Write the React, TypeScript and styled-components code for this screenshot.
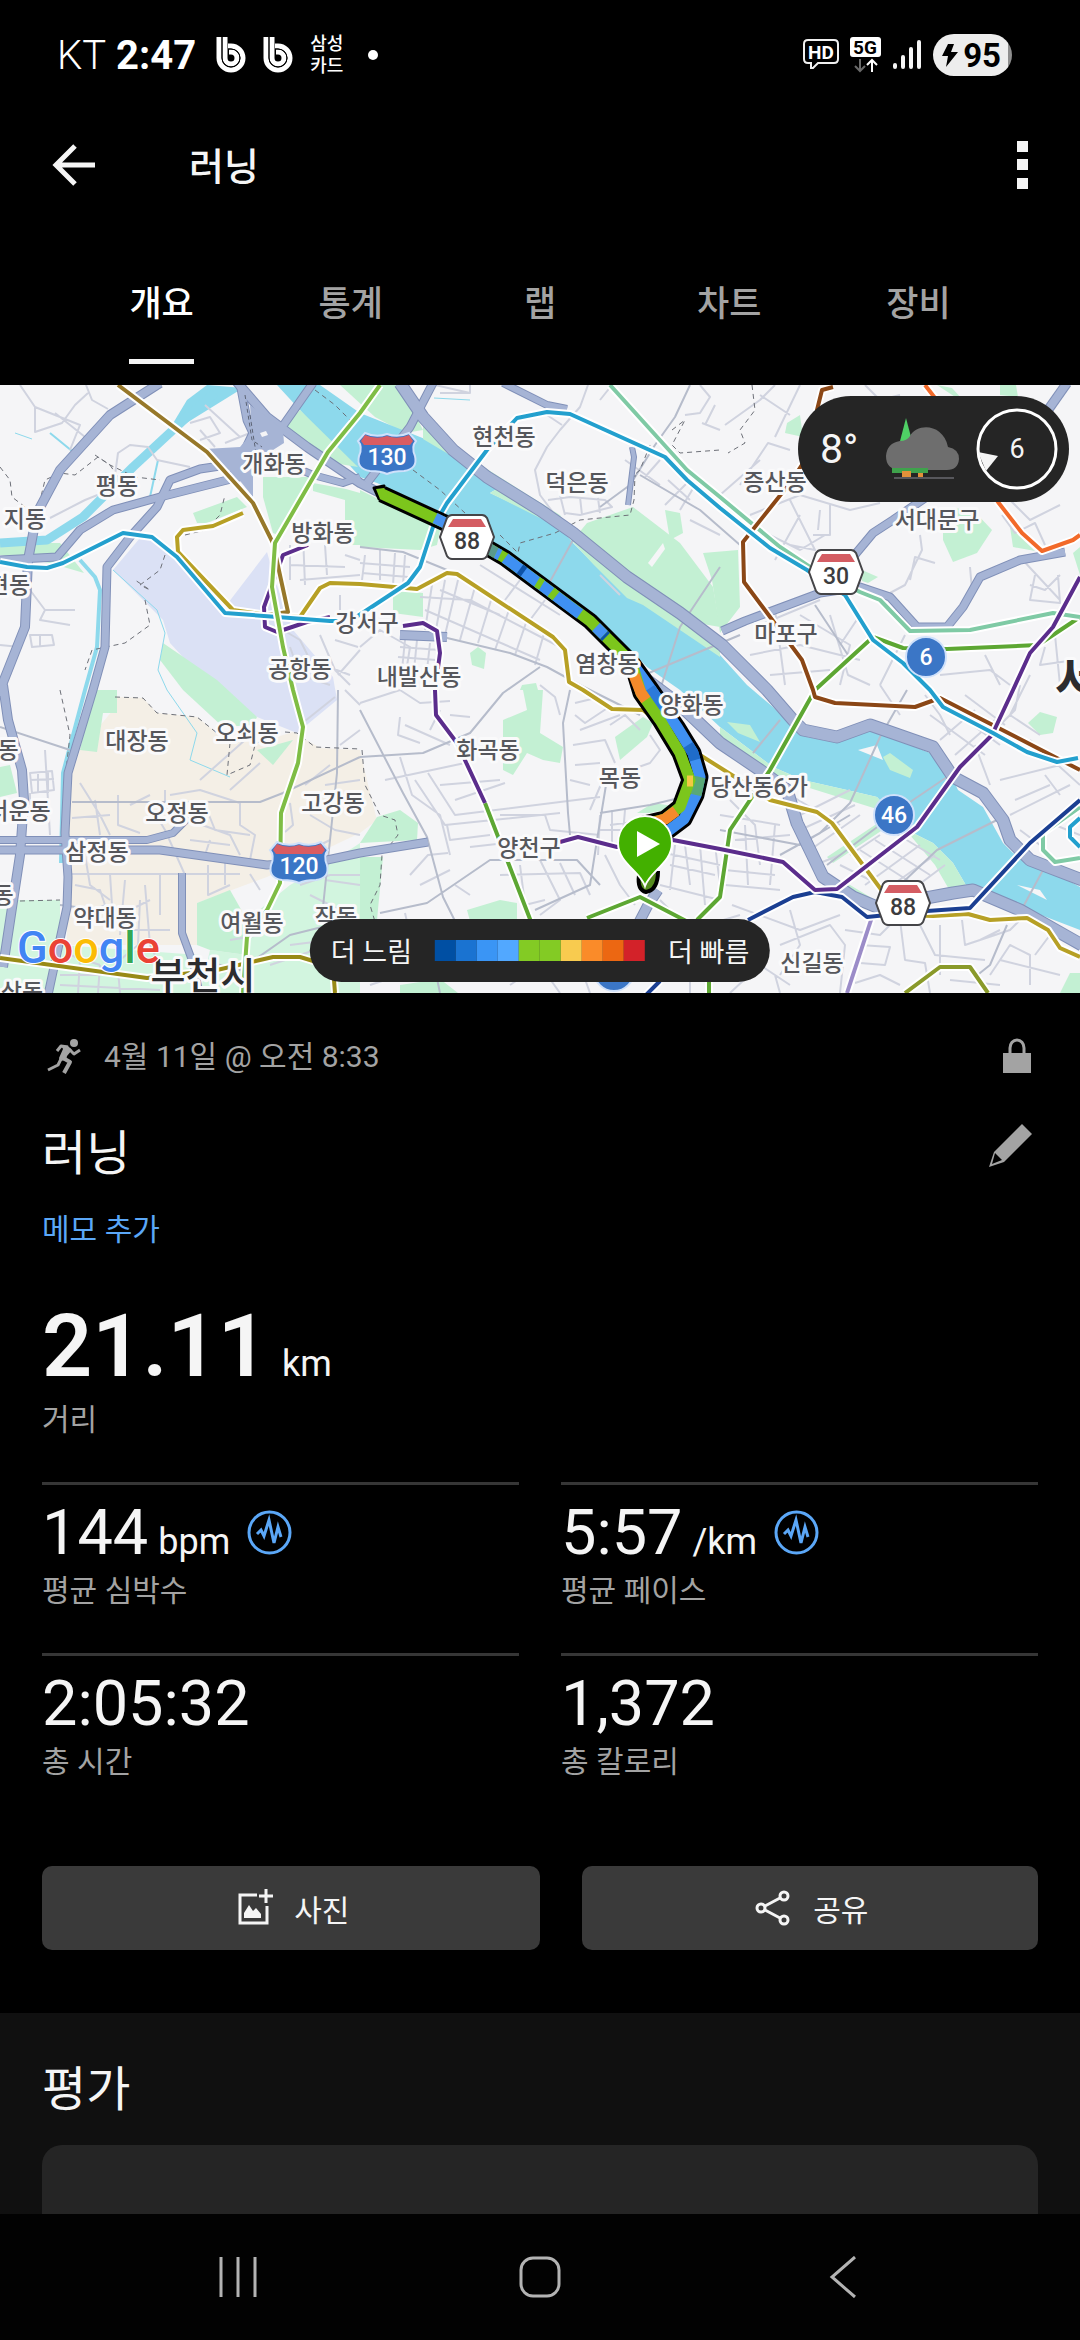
import { useState } from 'react'
import styled, { createGlobalStyle } from 'styled-components'

const colors = {
  black: '#000000',
  nav: '#020202',
  section: '#101010',
  pill: '#252525',
  button: '#3a3a3a',
  divider: '#363636',
  muted: '#a3a3a3',
  light: '#f5f5f5',
  link: '#5ba7f7',
}

const mapColors = {
  land: '#f5f5f7',
  water: '#8dd9ec',
  park: '#c3f0d3',
  field: '#f4efe6',
  airport: '#dbe1f5',
  street: '#d0d3df',
  road: '#b6bccb',
  highway: '#a6b4d5',
  highwayEdge: '#8090b8',
}

const tabs = ['개요', '통계', '랩', '차트', '장비']

const paceColors = [
  '#004fa3',
  '#1a73d1',
  '#3a95f5',
  '#52a8ff',
  '#83cb24',
  '#83cb24',
  '#f8cb4f',
  '#fa8b29',
  '#ec6712',
  '#d32229',
]

const stats = [
  { value: '144', unit: 'bpm', label: '평균 심박수', chart: true },
  { value: '5:57', unit: '/km', label: '평균 페이스', chart: true },
  { value: '2:05:32', unit: '', label: '총 시간', chart: false },
  { value: '1,372', unit: '', label: '총 칼로리', chart: false },
]

// map data, all in the 1080 x 608 space of the map

const fields = [
  '117,312 143,313 157,328 197,332 217,348 257,358 293,347 320,363 360,365 370,408 377,435 360,448 267,492 197,518 197,560 67,560 67,405 80,365 113,325',
]

const airport = '113,185 140,153 153,152 225,222 267,167 275,195 293,245 333,292 337,315 297,348 257,332 213,305 170,258 163,235'

const parks = [
  '263,92 310,92 283,152 273,148 263,112',
  '313,98 346,104 360,108 360,160 345,160 345,115 313,106',
  '193,128 237,112 247,122 207,138 197,138',
  '163,258 217,295 257,332 253,340 223,342 183,305 160,275',
  '0,158 60,158 84,188 50,178 0,170',
  '360,105 440,145 437,160 420,165 360,162',
  '393,205 423,208 423,232 393,228',
  '340,0 400,0 423,45 405,48 375,32',
  '573,155 587,138 633,122 680,158 713,202 720,242 680,235 627,195',
  '665,125 680,128 683,148 670,155',
  '703,168 738,165 740,222 720,248 712,195',
  '943,122 973,125 992,145 977,168 953,177 943,155',
  '787,38 800,30 803,52 785,48',
  '937,0 952,3 962,14 975,25',
  '1000,0 1016,0 1018,12 1000,10',
  '1010,142 1035,166 1013,162',
  '1073,168 1080,162 1080,190',
  '862,185 878,192 868,198 862,196',
  '503,335 527,325 523,305 543,305 540,348 563,362 560,378 543,375 527,368 513,390 503,385',
  '470,268 478,262 486,268 484,284 472,280',
  '522,300 536,298 538,305 520,305',
  '615,352 643,332 653,338 647,352 620,375',
  '377,432 400,425 418,438 417,455 360,458',
  '360,472 383,472 377,535 360,540',
  '467,525 500,515 517,518 517,534 470,536',
  '637,428 653,418 680,422 650,428',
  '400,600 440,594 458,608 400,608',
  '93,305 117,305 117,328 103,328 97,367 80,365',
  '257,365 293,355 273,380',
  '0,382 10,380 17,408 0,412',
  '827,472 887,432 893,438 833,478',
  '1028,338 1040,327 1057,332 1053,348 1040,350',
  '1060,608 1070,588 1080,588 1080,608',
  '197,518 230,505 247,535 247,570 210,565 197,560',
]

const palePark = [
  '247,535 290,500 327,480 360,458 360,608 200,608 210,565 247,570',
  '0,515 60,515 60,560 200,570 200,608 0,608',
]

const river =
  'M320 0 L360 28 L405 46 L430 56 L460 75 L500 102 L490 108 L520 122 L560 142 L573 158 L593 178 L627 212 L643 218 L680 240 L720 270 L747 300 L773 322 L793 342 L807 352 L833 357 L853 352 L873 345 L893 353 L930 368 L950 388 L958 405 L983 422 L1003 458 L1013 468 L1037 478 L1080 502 L1080 545 L1020 522 L987 505 L967 502 L953 478 L933 458 L907 445 L877 412 L847 405 L803 395 L773 382 L720 342 L680 305 L647 282 L593 228 L547 195 L487 158 L443 128 L377 98 L360 92 L300 25 L277 0 Z'

const riverside = [
  '300,25 358,82 333,78 283,42',
  '423,40 487,84 560,130 573,150 627,195 720,262 720,272 643,220 627,213 593,179 560,143 520,123 490,108 500,102 460,76 423,54',
  '720,342 773,382 803,395 847,405 877,412 900,438 880,425 800,400 760,384 720,350',
  '907,445 933,458 953,478 967,502 950,506 935,480 910,450',
  '727,337 750,340 760,357 738,348',
  '883,372 890,368 913,385 910,393 890,385',
  '830,495 850,500 880,518 860,515',
]

const sandbars = ['858,365 877,360 883,375', '1017,500 1040,505 1047,515', '648,178 663,158 665,164 652,182']

const highways = [
  { d: 'M160 -2 L110 30 L60 85 L37 128 L28 175 L25 242 L-2 310', w: 8 },
  { d: 'M0 175 L57 172 L80 145 L113 125 L160 112 L247 90', w: 7 },
  { d: 'M290 80 L313 90 L343 98 L360 92', w: 6 },
  { d: 'M240 78 L200 84 L170 95 L157 122 L130 152 L107 182 L105 262 L93 305 L68 388 L65 448 L68 492 L67 522 L48 610', w: 7 },
  { d: 'M240 -2 L247 35 L253 48 L233 90', w: 7 },
  { d: 'M313 -2 L280 45 L240 88', w: 7 },
  { d: 'M236 -4 L267 32 L307 62 L360 98 L380 108', w: 8 },
  { d: 'M433 -2 L410 42 L367 98', w: 7 },
  { d: 'M400 -2 L423 32 L453 65 L487 92 L540 125 L573 148 L627 192 L680 228 L722 260 L767 305 L793 335 L803 345 L837 352 L870 340 L893 348 L933 362 L953 392 L983 408 L1003 435 L1010 455 L1030 475 L1082 495', w: 11 },
  { d: 'M640 290 L680 320 L720 358 L760 385 L787 405 L797 438 L823 492 L853 512 L877 522 L953 508 L973 505 L1020 525 L1082 560', w: 11 },
  { d: 'M503 -2 L547 20 L567 24', w: 6 },
  { d: 'M632 62 L634 72 L628 120', w: 4 },
  { d: 'M3 300 L8 335 L22 385 L24 415 L20 470 L3 582', w: 8 },
  { d: 'M0 455 L147 455 L173 448 L203 418', w: 6 },
  { d: 'M0 465 L160 465 L267 480 L327 475 L360 468 L428 457', w: 7 },
  { d: 'M182 488 L182 548 L193 578 L200 610', w: 6 },
  { d: 'M1067 -2 L1048 25', w: 8 },
  { d: 'M925 113 L893 135 L873 148 L853 172', w: 7 },
  { d: 'M722 246 L745 236 L820 208 L860 202 L890 212 L917 242 L947 242 L963 222 L980 192 L1020 175 L1065 167', w: 7 },
  { d: 'M400 250 L447 252', w: 8 },
  { d: 'M658 505 L648 520 L635 545', w: 9 },
]

const interchange = '250,20 267,32 283,45 284,58 262,72 253,85 253,112 237,92 213,72 205,64 240,62 252,48'

const arterials =
  'M360 162 L403 167 L447 185 M443 252 L510 268 L547 282 L580 300 L640 330 M360 325 L403 408 L427 452 L443 512 L457 540 M360 372 L423 368 L470 348 L503 308 L540 282 M570 305 L563 338 L568 428 L570 450 M380 528 L427 518 L490 475 L577 475 L600 500 M72 417 L260 417 L283 408 L360 372 M0 342 L70 365 M338 305 L337 388 L323 522 M573 155 L547 202 M720 182 L680 242 L660 305 M907 305 L880 352 L850 418 L820 448 L780 470 M780 335 L753 368 M947 392 L913 415 L860 455 L827 480 M1003 432 L937 465 L900 500 M1043 485 L1023 522 M640 90 L700 125 L740 160 M690 0 L675 32 L655 60 L630 100 L600 122 M644 290 L740 250 M815 220 L848 270 M600 428 L650 420 L700 408 M430 560 L440 608 M1007 540 L990 580 L975 592 M720 445 L800 460 L850 430 M535 525 L590 500 L597 455 L606 400 M200 575 L240 585 L290 550 L330 540 M60 520 L100 525 L130 540'

const streets =
  'M20 0 L35 22 L35 47 L62 38 L75 20 L88 8 M35 22 L80 40 L70 65 M86 0 L92 15 L108 24 M55 28 L85 52 M115 90 L118 68 L130 60 L148 62 L157 75 L190 82 M50 133 L85 115 L110 105 M190 38 L210 32 L220 48 L200 55 M205 20 L240 52 M225 58 L250 48 M200 45 L215 62 M30 205 L45 225 L75 225 M45 225 L40 235 L70 240 M30 250 L52 250 L54 260 L32 262 Z M40 250 L40 262 M0 260 L20 262 L10 290 M290 160 L290 195 M290 180 L345 182 M303 150 L305 200 M325 160 L327 190 M300 195 L360 190 M340 210 L340 230 L360 228 M345 170 L360 175 M290 262 L300 290 L330 300 M283 245 L300 255 L310 275 L350 290 M320 250 L335 285 L350 300 M335 255 L358 262 M338 290 L360 265 M360 262 L380 245 L410 262 L404 300 M435 0 L470 8 M470 0 L470 8 L440 8 M588 0 L580 22 L560 45 L547 62 L535 85 L540 110 L555 130 M547 30 L562 40 M612 0 L600 15 M700 0 L710 12 L700 28 L685 30 M715 20 L705 40 M720 45 L702 38 M548 115 L570 112 L605 115 L612 122 L580 130 L565 128 M560 110 L565 130 M580 112 L582 130 M598 113 L600 128 M660 75 L645 92 M690 95 L665 120 M676 85 L700 108 M668 95 L690 115 M700 92 L680 125 M625 75 L660 100 M720 150 L690 135 M590 270 L610 290 M620 210 L600 190 M725 40 L760 15 L775 0 M740 100 L768 58 L790 65 M800 0 L775 52 M760 10 L790 30 M720 110 L760 75 M750 130 L800 110 L850 125 L880 118 M790 115 L815 165 L790 160 M820 125 L818 145 M830 120 L830 150 L813 150 M760 145 L800 165 L825 150 M775 175 L800 130 M865 0 L880 15 L900 10 M1055 30 L1060 50 L1030 80 M1005 110 L1030 135 L1060 120 M1010 135 L1025 150 M920 150 L922 165 L905 200 L890 208 M910 195 L915 172 L935 178 M970 182 L972 205 M1002 130 L1015 148 L1035 138 L1045 160 M1030 200 L1045 205 L1060 190 M1035 190 L1030 215 L1060 218 L1058 190 M1020 172 L1060 215 M760 240 L820 215 M775 225 L785 300 M800 230 L850 260 L840 300 M750 270 L800 260 L860 275 M770 290 L830 285 M830 230 L848 290 L870 300 M860 230 L840 260 M905 250 L880 300 M940 290 L990 285 L1010 300 M985 270 L1000 300 M1045 262 L1040 280 L1075 275 M1055 250 L1060 300 M880 300 L900 330 M925 310 L940 330 L950 350 M1030 290 L1010 330 L1040 350 M1000 340 L1015 325 L1020 300 M975 360 L990 400 M1030 355 L1080 400 M1000 395 L1060 380 M1015 415 L1050 400 M1010 430 L1070 400 M1045 390 L1060 410 M1020 445 L1040 460 M1055 440 L1080 450 M360 318 L400 305 L420 318 L450 316 M400 332 L398 350 L420 358 M440 325 L430 345 M450 330 L470 332 M385 395 L465 378 M400 372 L412 410 L440 430 L450 470 M415 395 L445 440 L560 428 M428 388 L455 430 L600 412 M440 400 L500 395 M447 440 L450 455 L490 450 M455 415 L505 398 M405 340 L450 360 M500 430 L545 430 L550 445 L600 450 M470 462 L560 452 M540 300 L555 312 L560 330 M575 318 L600 312 M575 330 L585 338 L612 320 M580 345 L620 330 M573 360 L605 355 L615 378 M590 425 L605 390 M575 380 L600 378 M570 395 L590 400 M650 350 L660 365 L650 378 L630 385 M610 340 L625 330 L640 345 M410 490 L428 470 L448 468 M420 500 L450 485 M455 500 L470 510 M405 528 L410 550 M470 560 L500 540 M520 480 L525 520 L545 515 M500 490 L580 488 L590 510 M540 475 L560 515 L540 530 M560 478 L575 510 M605 470 L620 500 L635 520 M610 440 L640 436 M600 430 L598 470 M612 425 L612 460 M625 425 L622 460 M600 445 L622 445 M665 455 L718 462 M665 468 L720 480 M670 480 L715 490 M675 460 L670 505 M685 460 L690 500 M700 460 L705 520 M715 460 L720 500 M660 500 L720 515 M660 515 L690 545 L740 530 M720 430 L780 440 M725 485 L775 490 M725 500 L780 505 M775 440 L770 500 M745 440 L748 500 M760 480 L755 440 L730 415 M735 455 L790 450 M732 520 L800 545 L840 530 M780 560 L830 540 L845 560 L840 608 M720 570 L755 540 M730 608 L760 580 L790 600 M790 525 L800 560 L780 590 M845 545 L880 550 L900 530 M860 560 L890 562 L885 580 L860 578 M900 535 L905 575 L925 578 L930 608 M920 540 L935 570 L985 575 M940 540 L940 590 M962 535 L965 560 L1010 545 L1020 535 M990 590 L1010 560 L1030 570 L1030 600 M1000 575 L1060 590 M1035 570 L1050 550 M980 555 L1000 545 M950 595 L1000 600 M855 598 L880 590 L900 600 M30 388 L52 386 L54 405 L32 408 Z M30 395 L54 394 M38 387 L38 408 M48 386 L48 408 M30 408 L30 420 M45 365 L50 450 M80 398 L100 430 L110 450 M72 433 L110 430 M85 470 L90 500 L110 515 M95 415 L100 450 M118 410 L118 440 L140 448 M130 420 L150 410 M150 420 L165 445 L185 490 M165 405 L165 418 M170 410 L200 405 L240 418 L240 440 L255 450 L250 475 M205 420 L215 445 L250 450 M180 432 L230 450 L240 470 M190 455 L230 460 M210 455 L205 470 M200 395 L245 355 M260 378 L230 405 M290 418 L293 440 L285 447 M305 400 L330 380 M325 400 L360 395 M310 430 L335 445 L360 450 M300 340 L335 312 M345 305 L360 320 M340 360 L360 345 M300 470 L330 455 M325 495 L360 500 M70 489 L240 489 M75 500 L100 505 L105 520 L85 530 M110 489 L112 520 M125 495 L120 550 M145 500 L150 560 M160 489 L160 530 M208 480 L208 510 L230 500 M225 470 L225 500 M250 489 L260 505 M100 540 L150 515 M130 545 L170 545 M140 515 L138 560 L120 575 M230 555 L260 550 M290 560 L330 555 M270 580 L330 560 M300 500 L330 490 L360 490 M310 510 L350 530 M70 570 L100 580 M60 590 L120 590 M80 575 L78 608 M100 580 L98 608 M118 585 L120 608 M60 600 L160 605 M150 560 L165 590 M370 600 L400 590 M510 600 L540 580 L560 608 M580 580 L590 608 M690 580 L690 608 M780 608 L775 590'

const borders =
  'M0 82 L10 95 L12 112 L25 122 M37 128 L45 95 L60 88 L75 90 L98 72 L110 80 L135 92 L160 95 M95 70 L110 80 L120 95 M185 150 L205 145 L220 130 L225 110 M165 170 L160 185 L140 200 L150 205 L135 195 M145 215 L150 240 L125 258 L92 265 L85 285 M60 305 L70 350 L65 395 M115 312 L143 313 L157 328 L197 332 L217 348 M285 347 L297 348 L315 362 L360 364 M230 358 L227 390 L250 380 L255 360 L265 352 M20 516 L60 515 M413 85 L440 105 L465 128 M315 5 L335 20 L350 35 M500 150 L518 168 L520 158 L555 148 L580 135 L630 130 L634 115 L635 90 M650 60 L640 85 L632 92 M672 45 L685 35 L672 60 L680 68 L720 65 M752 0 L755 25 L740 45 L745 58 L728 68 M362 365 L365 400 L380 430 L395 435 L398 450 L382 470 L380 500 L370 520 L376 540'

const streams = [
  { d: 'M215 8 L187 32 L133 82 L83 132 L47 155 L0 158', w: 9 },
  { d: 'M80 175 L95 192 L100 205 L97 262 L85 305 L63 388 L61 478', w: 4 },
  { d: 'M158 75 L150 112', w: 2 },
  { d: 'M50 48 L72 66 L100 38', w: 2 },
  { d: 'M15 48 L32 54', w: 1 },
  { d: 'M434 13 L470 15', w: 1 },
  { d: 'M113 185 L157 225 L165 248 L158 285 L167 305 L197 348 L190 375 L230 392', w: 1 },
]

const metroLines = [
  { color: '#5da733', d: 'M587 533 L640 512 L690 538 M485 418 L530 534 L545 575 M697 535 L720 512 L730 445 L770 385 L815 305 L873 252 L903 263 L947 264 L1038 260 L1080 232 M709 590 L709 610' },
  { color: '#8a9a2a', d: 'M905 608 L940 582 L970 582 L988 608' },
  { color: '#988a16', d: 'M0 573 L147 593 L217 585 L273 572 L300 572 L333 582 L335 608' },
  { color: '#9b8cc8', d: 'M847 608 L872 532' },
  { color: '#b7a025', d: 'M243 128 L213 141 L183 145 L177 152 L178 167 L233 225 L267 230 L300 232 L320 203 L330 198 L360 199 L417 204 L447 188 L457 189 L553 252 L565 265 L569 297 L583 305 L612 324 L643 325 L700 370 L735 392 L770 415 L817 427 L832 438 L880 503 L900 530 L933 531 L968 529 L990 535 L1027 533 L1048 545 L1060 563 L1080 572' },
  { color: '#7fcaa5', d: 'M610 0 L687 85 L720 112 L780 162 L810 182 L860 207 L880 215 L910 246 L970 245 L1053 228 L1080 232 M1080 422 L1043 448 L1043 465 L1055 477 L1080 473' },
  { color: '#8b4716', d: 'M833 2 L822 5 L817 25 L815 60 L790 98 L743 157 L744 197 L802 275 L813 305 L815 312 L835 318 L915 322 L940 313 L1080 385' },
  { color: '#f26a2a', d: 'M925 0 L935 13 L998 117 L1022 148 L1042 166 L1073 155 L1080 150' },
  { color: '#1b3f92', d: 'M748 535 L793 512 L815 507 L842 512 L867 532 L927 526 L970 523 L1030 458 L1080 415 M660 596 L646 610' },
  { color: '#5b2d8c', d: 'M308 160 L283 170 L264 222 L265 242 L277 247 L307 237 L330 232 M403 241 L423 238 L437 246 L440 268 L435 305 L436 330 L457 358 L485 418 M560 457 L578 452 L617 462 L673 455 L720 464 L783 477 L815 505 L837 504 L917 442 L960 382 L992 350 L1013 305 L1030 268 L1053 242 L1080 192' },
  { color: '#97782a', d: 'M118 0 L207 67 L253 118 L273 158 L288 227 L267 230' },
  { color: '#23a0ce', d: 'M0 177 L27 182 L47 183 L63 178 L123 148 L152 152 L177 172 L225 228 L330 236 L350 236 L367 225 L408 198 L420 182 L433 142 L447 118 L487 65 L517 33 L547 27 L570 29 L665 72 L687 95 L720 123 L770 163 L807 185 L845 210 L873 255 L903 278 L930 305 L943 322 L993 348 L1027 367 L1057 377 L1078 373 M1080 433 L1070 442 L1070 452 L1080 462' },
  { color: '#7fbd45', d: 'M380 0 L360 28 L328 67 L275 158 L272 202 L283 262 L293 305 L303 342 L298 378 L281 428 L280 498 L267 525 L247 552 L243 608' },
]

const routeOuter = 'M382 109 L445 138 L505 173 L590 236 L632 278'
const routeOut = 'M632 278 L650 303 L677 342 L693 368 L700 392 L696 410 L684 434 L668 446 L640 455'
const routeBack = 'M632 278 L641 308 L660 335 L680 368 L690 395 L680 422 L665 434 L640 440'

const routePieces = [
  { d: routeOuter, c: '#7cc61c' },
  { d: 'M435 133 L445 138 L490 164', c: '#4793f0' },
  { d: 'M488 163 L496 168', c: '#5a9a8c' },
  { d: 'M496 168 L500 170', c: '#4793f0' },
  { d: 'M505 173 L580 229', c: '#3f90f2' },
  { d: 'M520 184 L524 187', c: '#0d52a8' },
  { d: 'M537 197 L542 200', c: '#7cc61c' },
  { d: 'M551 207 L556 211', c: '#7cc61c' },
  { d: 'M596 242 L604 250', c: '#4793f0' },
  { d: 'M604 250 L606 252', c: '#0d52a8' },
  { d: routeOut, c: '#3f90f2' },
  { d: 'M650 303 L663 322', c: '#2c7ada' },
  { d: 'M688 360 L693 368 L695 375', c: '#1f6cc9' },
  { d: 'M700 392 L696 410', c: '#59a877' },
  { d: routeBack, c: '#7cc61c' },
  { d: 'M634 290 L641 308 L646 315', c: '#f58a2b' },
  { d: 'M676 426 L665 434 L655 437', c: '#f58a2b' },
  { d: 'M687 396 L693 396', c: '#f3c845' },
]

const placeLabels: [string, number, number][] = [
  ['평동', 117, 101],
  ['지동', 25, 134],
  ['현동', 9, 200],
  ['개화동', 274, 79],
  ['방화동', 323, 148],
  ['강서구', 367, 238],
  ['공항동', 300, 284],
  ['현천동', 504, 52],
  ['덕은동', 577, 98],
  ['내발산동', 419, 292],
  ['염창동', 607, 279],
  ['증산동', 775, 97],
  ['서대문구', 937, 135],
  ['마포구', 786, 249],
  ['대장동', 137, 356],
  ['오쇠동', 247, 348],
  ['동', 8, 365],
  ['서운동', 19, 426],
  ['오정동', 177, 428],
  ['고강동', 333, 418],
  ['삼정동', 97, 467],
  ['동', 3, 510],
  ['약대동', 105, 533],
  ['여월동', 252, 538],
  ['작동', 336, 532],
  ['상동', 22, 607],
  ['화곡동', 488, 365],
  ['목동', 620, 393],
  ['양화동', 692, 320],
  ['당산동6가', 759, 402],
  ['양천구', 529, 463],
  ['신길동', 812, 578],
]

const InterstateShield = ({ x, y, label }: { x: number; y: number; label: string }) => (
  <g transform={`translate(${x} ${y})`}>
    <path
      d="M-22 -20 Q-11 -15 0 -19 Q11 -15 22 -20 L29 -12 Q24 -6 28 3 Q31 16 17 18 Q6 18 0 21 Q-6 18 -17 18 Q-31 16 -28 3 Q-24 -6 -29 -12 Z"
      fill="#3b76c6"
      stroke="#cfe1fb"
      strokeWidth="2"
    />
    <path d="M-22 -18 Q-11 -13 0 -17 Q11 -13 22 -18 L26 -12 L23 -8 H-23 L-26 -12 Z" fill="#d95c62" />
    <ShieldText y="12" fill="#ffffff">
      {label}
    </ShieldText>
  </g>
)

const HexShield = ({ x, y, label }: { x: number; y: number; label: string }) => (
  <g transform={`translate(${x} ${y})`}>
    <path
      d="M-15 -22 H15 Q18 -22 20 -19 L27 0 L20 19 Q18 22 15 22 H-15 Q-18 22 -20 19 L-27 0 L-20 -19 Q-18 -22 -15 -22 Z"
      fill="#ffffff"
      stroke="#454548"
      strokeWidth="2"
    />
    <path d="M-14 -18 H14 L19 -10 H-19 Z" fill="#d45d63" />
    <ShieldText y="12" fill="#3c3c3e">
      {label}
    </ShieldText>
  </g>
)

const RoundShield = ({ x, y, label }: { x: number; y: number; label?: string }) => (
  <g transform={`translate(${x} ${y})`}>
    <circle r="20" fill="#3b76c6" stroke="#cfe1fb" strokeWidth="2" />
    {label && (
      <ShieldText y="8" fill="#ffffff">
        {label}
      </ShieldText>
    )}
  </g>
)

const RouteMap = () => (
  <StyledMapCanvas viewBox="0 0 1080 608" preserveAspectRatio="xMidYMid slice" role="img" aria-label="러닝 경로">
    <rect width="1080" height="608" fill={mapColors.land} />
    {fields.map(points => (
      <polygon key={points} points={points} fill={mapColors.field} />
    ))}
    <polygon points={airport} fill={mapColors.airport} />
    {palePark.map(points => (
      <polygon key={points} points={points} fill="#d2f5df" />
    ))}
    {parks.map(points => (
      <polygon key={points} points={points} fill={mapColors.park} />
    ))}
    <path d={river} fill={mapColors.water} />
    {riverside.map(points => (
      <polygon key={points} points={points} fill={mapColors.park} />
    ))}
    <polygon points="207,0 243,3 180,42 172,40 187,15" fill={mapColors.water} />
    {sandbars.map(points => (
      <polygon key={points} points={points} fill={mapColors.land} />
    ))}
    <g fill="none" strokeLinejoin="round">
      {streams.map(({ d, w }) => (
        <path key={d} d={d} stroke={mapColors.water} strokeWidth={w} />
      ))}
      <path d={streets} stroke={mapColors.street} strokeWidth="2" />
      {/* dense street blocks between 등촌 and 염창 */}
      <path
        d="M365 170 L362 195 M380 165 L380 195 M395 168 L393 200 M405 170 L403 200 M360 178 L410 182 M362 188 L408 192 M420 212 L470 215 L560 262 M425 225 L540 275 M432 200 L425 245 M445 195 L435 250 M458 195 L445 250 M475 202 L460 255 M492 212 L478 258 M510 222 L495 265 M528 232 L515 270 M545 245 L535 280 M440 205 L500 230 M400 262 L440 265 M398 272 L436 275 M405 255 L402 285 M417 255 L414 285 M430 258 L427 285 M480 180 L560 230 M520 195 L505 215 M545 215 L530 235"
        stroke={mapColors.street}
        strokeWidth="2"
      />
      {/* 여의도 blocks */}
      <path
        d="M850 470 L880 450 M840 480 L890 505 M860 465 L915 500 M875 455 L930 490 M890 445 L940 475 M850 490 L905 455 M865 500 L920 460 M885 505 L935 470 M905 510 L945 480 M790 410 L840 440 M800 430 L850 405 M800 445 L855 420 M810 465 L860 430 M815 480 L840 470 M940 355 L975 325 M955 370 L995 335 M930 330 L985 370 M945 320 L1000 360 M965 310 L1005 340"
        stroke={mapColors.street}
        strokeWidth="2"
      />
      <path d={arterials} stroke={mapColors.road} strokeWidth="2" />
      <path d={borders} stroke="#6d7078" strokeWidth="1" strokeDasharray="5 4" />
      {highways.map(({ d, w }) => (
        <path key={d} d={d} stroke={mapColors.highwayEdge} strokeWidth={w + 2} />
      ))}
      {highways.map(({ d, w }) => (
        <path key={d} d={d} stroke={mapColors.highway} strokeWidth={w} />
      ))}
      <polygon points={interchange} fill={mapColors.highway} />
      <path d="M260 48 L266 46 L268 50 L262 52 Z" fill={mapColors.land} />
      <path d="M245 10 L252 55 L262 62 M250 30 L256 68" stroke="#5d6475" strokeWidth="1" strokeDasharray="4 3" />
      {metroLines.map(({ color, d }) => (
        <g key={color}>
          <path d={d} stroke="#ffffff" strokeWidth="8" />
          <path d={d} stroke={color} strokeWidth="4" />
        </g>
      ))}
    </g>

    <g fill="none" strokeLinejoin="round">
      <path d="M639 490 Q637 505 646 507 Q658 505 658 486" stroke="#000000" strokeWidth="4" fill="#558b1e" />
      <path d="M384 101 L374 103 L379 114 Z" stroke="#000000" strokeWidth="3" fill="#000000" />
      {[routeOuter, routeOut, routeBack].map(d => (
        <path key={d} d={d} stroke="#000000" strokeWidth="17" />
      ))}
      {routePieces.map(({ d, c }) => (
        <path key={d + c} d={d} stroke={c} strokeWidth="11" />
      ))}
      <path d="M384 103 L376 104 L380 114 L388 112 Z" fill="#7cc61c" />
    </g>

    {placeLabels.map(([name, x, y]) => (
      <PlaceName key={`${name}${y}`} x={x} y={y + 8}>
        {name}
      </PlaceName>
    ))}
    <CityName x="203" y="604">
      부천시
    </CityName>
    <CityName x="1099" y="312" $big>
      서울
    </CityName>

    <InterstateShield x={387} y={68} label="130" />
    <InterstateShield x={299} y={477} label="120" />
    <HexShield x={467} y={152} label="88" />
    <HexShield x={836} y={187} label="30" />
    <HexShield x={903} y={518} label="88" />
    <RoundShield x={926} y={272} label="6" />
    <RoundShield x={894} y={430} label="46" />
    <RoundShield x={614} y={586} />

    <path
      d="M645 501 C640 486 618 478 618 458 A27 27 0 0 1 672 458 C672 478 650 486 645 501 Z"
      fill="#43b000"
      stroke="#ffffff"
      strokeWidth="2"
    />
    <path d="M637 446 L660 459 L637 472 Z" fill="#ffffff" />

    <GoogleMark x="17" y="578">
      <tspan fill="#4285f4">G</tspan>
      <tspan fill="#ea4335">o</tspan>
      <tspan fill="#fbbc05">o</tspan>
      <tspan fill="#4285f4">g</tspan>
      <tspan fill="#34a853">l</tspan>
      <tspan fill="#ea4335">e</tspan>
    </GoogleMark>
  </StyledMapCanvas>
)

const BlogIcon = () => (
  <svg width="30" height="36" viewBox="0 0 30 36" fill="none" stroke="#ffffff" strokeWidth="5" aria-hidden="true">
    <path d="M3 0 V21 A12 12 0 1 0 15 9 H12" />
    <path d="M9 0 V21 A6 6 0 1 0 15 15 H13" />
    <path d="M6 0 V21 A9 9 0 1 0 15 12 H12" stroke="#000000" strokeWidth="1" />
  </svg>
)

const ChartBadge = () => (
  <svg width="45" height="45" viewBox="0 0 45 45" fill="none" stroke={colors.link} strokeWidth="3" aria-hidden="true">
    <circle cx="22.500" cy="22.500" r="20.500" />
    <path d="M10 24 L14 20 L17 26 L22 10 L27 33 L31 17 L34 27" strokeWidth="3" />
  </svg>
)

const App = () => {
  const [activeTab, setActiveTab] = useState(tabs[0])

  return (
    <>
      <GlobalStyle />
      <StyledPage>
        <StyledStatusBar>
          <StyledStatusGroup>
            <StyledClock>
              <StyledCarrier>KT</StyledCarrier> 2:47
            </StyledClock>
            <StyledNotices>
              <BlogIcon />
              <BlogIcon />
              <StyledCardNotice>
                삼성
                <br />
                카드
              </StyledCardNotice>
              <StyledDot />
            </StyledNotices>
          </StyledStatusGroup>
          <StyledStatusGroup>
            <StyledSystemIcons>
              <svg width="36" height="32" viewBox="0 0 36 32" fill="none" aria-label="HD">
                <path
                  d="M5 1 H31 Q35 1 35 5 V20 Q35 24 31 24 H15 L10 29 H8 V24 H5 Q1 24 1 20 V5 Q1 1 5 1 Z"
                  stroke="#f0f0f0"
                  strokeWidth="2"
                />
                <StatusText x="18" y="20" fill="#ffffff">
                  HD
                </StatusText>
              </svg>
              <svg width="32" height="36" viewBox="0 0 32 36" fill="none" aria-label="5G">
                <rect width="31" height="20" rx="3" fill="#ffffff" />
                <StatusText x="15" y="17" fill="#000000">
                  5G
                </StatusText>
                <path d="M10 22 V34 M5 29 L10 34 L15 29" stroke="#6a6a6a" strokeWidth="2" />
                <path d="M22 35 V23 M17 28 L22 23 L27 28" stroke="#ffffff" strokeWidth="2" />
              </svg>
              <svg width="28" height="30" viewBox="0 0 28 30" stroke="#f5f5f5" strokeWidth="4" strokeLinecap="round" aria-hidden="true">
                <path d="M2 25 V27 M10 17 V27 M18 9 V27 M26 2 V27" />
              </svg>
            </StyledSystemIcons>
            <StyledBattery>
              <svg width="16" height="23" viewBox="0 0 16 23" aria-hidden="true">
                <path d="M6 0 H12 L9 8 H16 L4 23 L6 12 H0 Z" fill="#000000" />
              </svg>
              95
            </StyledBattery>
          </StyledStatusGroup>
        </StyledStatusBar>

        <StyledAppBar>
          <StyledIconButton aria-label="뒤로">
            <svg width="43" height="42" viewBox="0 0 43 42" fill="none" stroke={colors.light} strokeWidth="5" aria-hidden="true">
              <path d="M43 21 H4 M23 2 L4 21 L23 40" />
            </svg>
          </StyledIconButton>
          <StyledAppTitle>러닝</StyledAppTitle>
          <StyledIconButton aria-label="더보기">
            <svg width="11" height="48" viewBox="0 0 11 48" fill={colors.light} aria-hidden="true">
              <path d="M0 0 h11 v11 h-11 Z M0 18 h11 v11 h-11 Z M0 37 h11 v11 h-11 Z" />
            </svg>
          </StyledIconButton>
        </StyledAppBar>

        <StyledTabs role="tablist">
          {tabs.map(tab => (
            <StyledTab
              key={tab}
              role="tab"
              aria-selected={tab === activeTab}
              $active={tab === activeTab}
              onClick={() => setActiveTab(tab)}
            >
              {tab}
            </StyledTab>
          ))}
        </StyledTabs>

        <StyledMap>
          <RouteMap />
          <StyledWeather>
            <StyledTemperature>8°</StyledTemperature>
            <svg width="75" height="64" viewBox="0 0 75 64" aria-hidden="true">
              <path d="M21 1 L26 20 L22 28 H14 Z" fill="#4fd065" />
              <path d="M15 24 Q22 24 25 19 C32 6 58 6 63 30 Q74 32 74 42 Q73 53 62 53 H14 Q1 52 1 39 Q2 26 15 24 Z" fill="#6e6e6e" />
              <path d="M7 51 H43 V56 H7 Z" fill="#3fa24c" />
              <path d="M17 54 H26 V60 H17 Z M33 56 H38 V60 H33 Z" fill="#e2913a" />
              <path d="M9 61 H69" stroke="#57575c" strokeWidth="2" />
            </svg>
            <StyledWind>
              <svg width="82" height="82" viewBox="0 0 82 82" aria-hidden="true">
                <circle cx="41" cy="41" r="39" fill="none" stroke="#ffffff" strokeWidth="3" />
                <path d="M2 44 L22 48 L10 63 Z" fill={colors.light} />
              </svg>
              <StyledWindSpeed>6</StyledWindSpeed>
            </StyledWind>
          </StyledWeather>
          <StyledLegend>
            <span>더 느림</span>
            <StyledScale>
              {paceColors.map((color, index) => (
                <StyledSwatch key={index} $color={color} />
              ))}
            </StyledScale>
            <span>더 빠름</span>
          </StyledLegend>
        </StyledMap>

        <StyledSummary>
          <StyledDateRow>
            <svg width="44" height="36" viewBox="-6 -1 44 36" fill="none" stroke={colors.muted} strokeLinejoin="round" aria-hidden="true">
              <circle cx="26" cy="4" r="4" fill={colors.muted} stroke="none" />
              <path d="M13 6 L20 7 L24 11 L19 17 L18 21 L12 22 L11 19 L15 10 Z" fill={colors.muted} stroke="none" />
              <path d="M9 12 L13 7 L20 8" strokeWidth="3" />
              <path d="M21 10 L26 15 L32 11" strokeWidth="3" />
              <path d="M15 19 L22 23 L16 34" strokeWidth="4" />
              <path d="M13 20 L10 26 L0 31" strokeWidth="3" />
            </svg>
            <StyledDate>4월 11일 @ 오전 8:33</StyledDate>
            <StyledLock width="28" height="36" viewBox="0 0 28 36" fill="none" aria-label="비공개">
              <path d="M0 15 H28 V35 H0 Z" fill={colors.muted} />
              <path d="M7 16 V10 A7 8 0 0 1 21 10 V16" stroke={colors.muted} strokeWidth="3" />
            </StyledLock>
          </StyledDateRow>

          <StyledTitleRow>
            <StyledHeading>러닝</StyledHeading>
            <StyledIconButton aria-label="이름 편집">
              <svg width="44" height="44" viewBox="0 0 44 44" aria-hidden="true">
                <path d="M33 0 L43 10 L15 38 L0 43 L5 28 Z" fill={colors.muted} />
                <path d="M6 29 L13 36 L3 40 Z" fill="#000000" />
              </svg>
            </StyledIconButton>
          </StyledTitleRow>

          <StyledMemoLink href="#memo">메모 추가</StyledMemoLink>

          <StyledDistance>
            21.11
            <StyledUnit>km</StyledUnit>
          </StyledDistance>
          <StyledLabel>거리</StyledLabel>

          <StyledStats>
            {stats.map(({ value, unit, label, chart }) => (
              <StyledStat key={label}>
                <StyledValueRow>
                  <StyledValue>{value}</StyledValue>
                  {unit && <StyledUnit>{unit}</StyledUnit>}
                  {chart && (
                    <StyledBadge aria-label={`${label} 차트`}>
                      <ChartBadge />
                    </StyledBadge>
                  )}
                </StyledValueRow>
                <StyledLabel>{label}</StyledLabel>
              </StyledStat>
            ))}
          </StyledStats>

          <StyledActions>
            <StyledAction>
              <svg width="42" height="42" viewBox="0 0 42 42" fill="none" stroke={colors.light} strokeWidth="3" aria-hidden="true">
                <path d="M25 8 H8 V36 H35 V19" />
                <path d="M34 2 V16 M27 9 H41" />
                <path d="M12 31 V26 L17 18 L21 24 L24 21 L29 27 V31 Z" fill={colors.light} stroke="none" />
              </svg>
              사진
            </StyledAction>
            <StyledAction>
              <svg width="42" height="42" viewBox="0 0 42 42" fill="none" stroke={colors.light} strokeWidth="3" aria-hidden="true">
                <circle cx="10" cy="21" r="4" />
                <circle cx="33" cy="9" r="4" />
                <circle cx="33" cy="33" r="4" />
                <path d="M14 19 L29 11 M14 23 L29 31" />
              </svg>
              공유
            </StyledAction>
          </StyledActions>
        </StyledSummary>

        <StyledRating>
          <StyledHeading>평가</StyledHeading>
          <StyledRatingCard />
        </StyledRating>

        <StyledNavBar>
          <StyledIconButton aria-label="최근 앱">
            <svg width="42" height="42" viewBox="0 0 42 42" stroke="#b3b3b3" strokeWidth="3" aria-hidden="true">
              <path d="M4 1 V41 M21 1 V41 M38 1 V41" />
            </svg>
          </StyledIconButton>
          <StyledIconButton aria-label="홈">
            <svg width="42" height="42" viewBox="0 0 42 42" fill="none" stroke="#b3b3b3" strokeWidth="3" aria-hidden="true">
              <rect x="2" y="2" width="38" height="38" rx="12" />
            </svg>
          </StyledIconButton>
          <StyledIconButton aria-label="이전">
            <svg width="42" height="42" viewBox="0 0 42 42" fill="none" stroke="#b3b3b3" strokeWidth="3" aria-hidden="true">
              <path d="M34 1 L11 21 L34 41" />
            </svg>
          </StyledIconButton>
        </StyledNavBar>
      </StyledPage>
    </>
  )
}

export default App

const GlobalStyle = createGlobalStyle`
  * {
    box-sizing: border-box;
  }

  body {
    margin: 0;
    background: ${colors.black};
    color: ${colors.light};
    font-family: Roboto, 'Noto Sans CJK KR', sans-serif;
  }

  button {
    padding: 0;
    border: 0;
    background: none;
    color: inherit;
    font: inherit;
    cursor: pointer;
  }

  svg {
    display: block;
    flex-shrink: 0;
  }
`

const StyledPage = styled.div`
  min-height: 100vh;
  display: flex;
  flex-direction: column;
`

const StyledStatusBar = styled.div`
  height: 110px;
  padding: 0 68px 0 57px;
  display: flex;
  align-items: center;
  justify-content: space-between;
  color: #ffffff;
`
const StyledStatusGroup = styled.div`
  display: flex;
  align-items: center;
  gap: 12px;
`
const StyledClock = styled.div`
  font-size: 40px;
  font-weight: 700;
`
const StyledCarrier = styled.span`
  font-weight: 300;
`
const StyledNotices = styled.div`
  margin-left: 8px;
  display: flex;
  align-items: center;
  gap: 17px;
`
const StyledCardNotice = styled.div`
  font-size: 18px;
  font-weight: 500;
  line-height: 22px;
`
const StyledDot = styled.div`
  width: 10px;
  height: 10px;
  margin-left: 8px;
  border-radius: 5px;
  background: #ffffff;
`
const StyledSystemIcons = styled.div`
  display: flex;
  align-items: center;
  gap: 11px;
`
const StatusText = styled.text`
  font-size: 19px;
  font-weight: 700;
  text-anchor: middle;
`
const StyledBattery = styled.div`
  height: 42px;
  padding: 0 11px 0 9px;
  display: flex;
  align-items: center;
  gap: 5px;
  border-radius: 21px;
  background: linear-gradient(to right, #ededed 95%, #8e8e8e 95%);
  color: #000000;
  font-size: 33px;
  font-weight: 700;
`

const StyledAppBar = styled.header`
  height: 110px;
  padding: 0 52px;
  display: flex;
  align-items: center;
`
const StyledIconButton = styled.button`
  display: flex;
  align-items: center;
  justify-content: center;
`
const StyledAppTitle = styled.h1`
  flex: 1;
  margin: 0 0 0 94px;
  padding-top: 4px;
  font-size: 38px;
  font-weight: 500;
  line-height: 50px;
`

const StyledTabs = styled.div`
  padding: 0 67px 21px;
  display: grid;
  grid-template-columns: repeat(5, 1fr);
  justify-items: center;
`
const StyledTab = styled.button<{ $active: boolean }>`
  && {
    padding: 60px 0 29px;
    border-bottom: 5px solid ${({ $active }) => ($active ? colors.light : 'transparent')};
    color: ${({ $active }) => ($active ? '#ffffff' : colors.muted)};
    font-size: 35px;
    font-weight: 500;
    line-height: 50px;
  }
`

const StyledMap = styled.section`
  position: relative;
  height: 608px;
  overflow: hidden;
`
const StyledMapCanvas = styled.svg`
  width: 100%;
  height: 100%;
`
const PlaceName = styled.text`
  fill: #56575c;
  stroke: #fafafb;
  stroke-width: 6px;
  stroke-linejoin: round;
  paint-order: stroke;
  font-size: 23px;
  font-weight: 500;
  text-anchor: middle;
`
const CityName = styled(PlaceName)<{ $big?: boolean }>`
  fill: #2c2c2f;
  font-size: ${({ $big }) => ($big ? 48 : 38)}px;
  font-weight: ${({ $big }) => ($big ? 700 : 500)};
`
const ShieldText = styled.text`
  font-size: 23px;
  font-weight: 500;
  text-anchor: middle;
`
const GoogleMark = styled.text`
  stroke: #ffffff;
  stroke-width: 2px;
  paint-order: stroke;
  font-size: 45px;
  font-weight: 500;
`

const StyledWeather = styled.div`
  position: absolute;
  top: 11px;
  right: 11px;
  height: 106px;
  padding: 0 11px 0 22px;
  display: flex;
  align-items: center;
  gap: 16px;
  width: 271px;
  border-radius: 53px;
  background: ${colors.pill};
`
const StyledTemperature = styled.span`
  flex: 1;
  font-size: 41px;
`
const StyledWind = styled.div`
  display: grid;
  place-items: center;

  > * {
    grid-area: 1 / 1;
  }
`
const StyledWindSpeed = styled.span`
  font-size: 27px;
`
const StyledLegend = styled.div`
  position: absolute;
  bottom: 11px;
  left: 50%;
  transform: translateX(-50%);
  height: 63px;
  padding: 0 21px;
  display: flex;
  align-items: center;
  gap: 23px;
  border-radius: 32px;
  background: ${colors.pill};
  font-size: 27px;
  white-space: nowrap;
`
const StyledScale = styled.div`
  display: flex;
`
const StyledSwatch = styled.div<{ $color: string }>`
  width: 21px;
  height: 21px;
  background: ${({ $color }) => $color};
`

const StyledSummary = styled.main`
  padding: 39px 42px 63px;
`
const StyledDateRow = styled.div`
  height: 48px;
  display: flex;
  align-items: center;
  gap: 18px;
`
const StyledDate = styled.span`
  flex: 1;
  padding-bottom: 5px;
  color: ${colors.muted};
  font-size: 30px;
`
const StyledLock = styled.svg`
  margin-right: 7px;
`
const StyledTitleRow = styled.div`
  margin: 39px 5px 0 0;
  display: flex;
  align-items: center;
  justify-content: space-between;

  button {
    margin-bottom: 16px;
  }
`
const StyledHeading = styled.h2`
  margin: 0;
  font-size: 48px;
  font-weight: 400;
  line-height: 70px;
`
const StyledMemoLink = styled.a`
  display: inline-block;
  margin-top: 21px;
  color: ${colors.link};
  font-size: 30px;
  line-height: 40px;
  text-decoration: none;
`
const StyledDistance = styled.div`
  margin: 44px 0 2px;
  display: flex;
  align-items: baseline;
  gap: 14px;
  font-size: 88px;
  font-weight: 600;
  line-height: 103px;
`
const StyledUnit = styled.span`
  font-size: 36px;
  font-weight: 400;
  line-height: 40px;
`
const StyledLabel = styled.div`
  color: ${colors.muted};
  font-size: 30px;
  line-height: 42px;
`

const StyledStats = styled.div`
  margin-top: 41px;
  display: grid;
  grid-template-columns: 1fr 1fr;
  column-gap: 42px;
`
const StyledStat = styled.div`
  height: 171px;
  padding-top: 10px;
  border-top: 3px solid ${colors.divider};
`
const StyledValueRow = styled.div`
  display: flex;
  align-items: baseline;
  gap: 10px;
`
const StyledValue = styled.span`
  font-size: 63px;
  line-height: 75px;
`
const StyledBadge = styled(StyledIconButton)`
  align-self: center;
  margin-left: 7px;
`

const StyledActions = styled.div`
  margin-top: 42px;
  display: grid;
  grid-template-columns: 12fr 11fr;
  gap: 42px;
`
const StyledAction = styled.button`
  && {
    height: 84px;
    display: flex;
    align-items: center;
    justify-content: center;
    gap: 20px;
    border-radius: 10px;
    background: ${colors.button};
    font-size: 30px;
  }
`

const StyledRating = styled.section`
  flex: 1;
  padding: 42px 42px 0;
  display: flex;
  flex-direction: column;
  background: ${colors.section};
`
const StyledRatingCard = styled.div`
  flex: 1;
  min-height: 69px;
  margin-top: 20px;
  border-radius: 20px 20px 0 0;
  background: ${colors.pill};
`

const StyledNavBar = styled.nav`
  height: 126px;
  padding: 0 87px;
  display: grid;
  grid-template-columns: repeat(3, 1fr);
  align-items: center;
  justify-items: center;
  background: ${colors.nav};
`
